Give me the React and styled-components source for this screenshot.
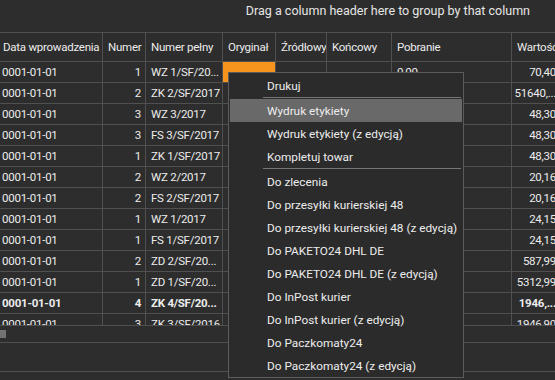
import React from "react";
import styled, { createGlobalStyle, css } from "styled-components";

const GlobalStyle = createGlobalStyle`
  html, body { margin: 0; padding: 0; background: #2d2d2d; overflow: hidden; }
  * { box-sizing: border-box; }
`;

const COLS = "103px 43px 77px 53px 51px 65px 120px 49px";
const LINE = "#505050";
const FONT = `Roboto, "Liberation Sans", Arial, sans-serif`;

const Screen = styled.div`
  position: relative;
  width: 555px;
  height: 380px;
  overflow: hidden;
  background: #2d2d2d;
  color: #ececec;
  font-family: ${FONT};
  font-size: 12px;
`;

const GroupPanel = styled.div`
  height: 32px;
  display: flex;
  align-items: flex-start;
  justify-content: flex-end;
  padding: 3px 25px 0 0;
  font-size: 12.5px;
  color: #e6e6e6;
`;

const Grid = styled.div`
  width: 561px;
  font-size: 11.5px;
  letter-spacing: -0.25px;
`;

const HeaderRow = styled.div`
  display: grid;
  grid-template-columns: ${COLS};
  height: 30px;
  border-top: 1px solid ${LINE};
  border-bottom: 1px solid ${LINE};
`;

const HeaderCell = styled.div`
  display: flex;
  align-items: center;
  padding-left: ${(p) => (p.$first ? 3 : 5)}px;
  border-right: 1px solid ${LINE};
  white-space: nowrap;
  overflow: hidden;
`;

const Viewport = styled.div`
  height: 263px;
  overflow: hidden;
`;

const Row = styled.div`
  display: grid;
  grid-template-columns: ${COLS};
  height: 21px;
  border-bottom: 1px solid ${LINE};
  font-weight: ${(p) => (p.$bold ? 700 : 400)};
`;

const Cell = styled.div`
  display: flex;
  align-items: center;
  justify-content: ${(p) => (p.$right ? "flex-end" : "flex-start")};
  padding: ${(p) => (p.$right ? "0 4px 0 0" : p.$first ? "0 0 0 2px" : "0 0 0 5px")};
  border-right: 1px solid ${LINE};
  white-space: nowrap;
  overflow: hidden;
  ${(p) =>
    p.$orange &&
    css`
      background: #f7941d;
    `}
`;

const HScroll = styled.div`
  height: 18px;
  border-top: 1px solid ${LINE};
  border-bottom: 1px solid ${LINE};
  padding-top: 4px;
`;

const Thumb = styled.div`
  width: 6px;
  height: 8px;
  background: #727272;
`;

const FooterPanel = styled.div`
  height: 29px;
  border-bottom: 1px solid ${LINE};
`;

const Menu = styled.div`
  position: absolute;
  left: 228px;
  top: 72px;
  width: 236px;
  padding: 1px 1px 0 1px;
  background: #2b2b2b;
  border: 1px solid #5c5c5c;
  font-family: ${FONT};
  font-size: 11.8px;
  color: #ededed;
`;

const MenuItem = styled.div`
  height: 23px;
  display: flex;
  align-items: center;
  padding-left: 37px;
  white-space: nowrap;
  background: ${(p) => (p.$active ? "#696969" : "transparent")};
`;

const Separator = styled.div`
  height: 1px;
  margin: 0 1px 1px 33px;
  background: #767676;
`;

const headers = [
  "Data wprowadzenia",
  "Numer",
  "Numer pełny",
  "Oryginał",
  "Źródłowy",
  "Końcowy",
  "Pobranie",
  "Wartość",
];

const rows = [
  ["1", "WZ 1/SF/20...", "70,40", true, false, "0,00"],
  ["2", "ZK 2/SF/2017", "51640,..."],
  ["3", "WZ 3/2017", "48,30"],
  ["3", "FS 3/SF/2017", "48,30"],
  ["1", "ZK 1/SF/2017", "48,30"],
  ["2", "WZ 2/2017", "20,16"],
  ["2", "FS 2/SF/2017", "20,16"],
  ["1", "WZ 1/2017", "24,15"],
  ["1", "FS 1/SF/2017", "24,15"],
  ["2", "ZD 2/SF/20...", "587,99"],
  ["1", "ZD 1/SF/20...", "5312,99"],
  ["4", "ZK 4/SF/20...", "1946,...", false, true],
  ["3", "ZK 3/SF/2016", "1946,90"],
];

const menu = [
  { label: "Drukuj" },
  { sep: true },
  { label: "Wydruk etykiety", active: true },
  { label: "Wydruk etykiety (z edycją)" },
  { label: "Kompletuj towar" },
  { sep: true },
  { label: "Do zlecenia" },
  { label: "Do przesyłki kurierskiej 48" },
  { label: "Do przesyłki kurierskiej 48 (z edycją)" },
  { label: "Do PAKETO24 DHL DE" },
  { label: "Do PAKETO24 DHL DE (z edycją)" },
  { label: "Do InPost kurier" },
  { label: "Do InPost kurier (z edycją)" },
  { label: "Do Paczkomaty24" },
  { label: "Do Paczkomaty24 (z edycją)" },
];

export default function App() {
  return (
    <Screen>
      <GlobalStyle />
      <GroupPanel>Drag a column header here to group by that column</GroupPanel>
      <Grid>
        <HeaderRow>
          {headers.map((h, i) => (
            <HeaderCell key={h} $first={i === 0}>
              {h}
            </HeaderCell>
          ))}
        </HeaderRow>
        <Viewport>
          {rows.map(([num, full, value, orange, bold, pob], i) => (
            <Row key={i} $bold={bold}>
              <Cell $first>0001-01-01</Cell>
              <Cell $right>{num}</Cell>
              <Cell>{full}</Cell>
              <Cell $orange={orange} />
              <Cell />
              <Cell />
              <Cell>{pob}</Cell>
              <Cell $right>{value}</Cell>
            </Row>
          ))}
        </Viewport>
        <HScroll>
          <Thumb />
        </HScroll>
        <FooterPanel />
      </Grid>
      <Menu>
        {menu.map((m, i) =>
          m.sep ? (
            <Separator key={i} />
          ) : (
            <MenuItem key={i} $active={m.active}>
              {m.label}
            </MenuItem>
          )
        )}
      </Menu>
    </Screen>
  );
}
